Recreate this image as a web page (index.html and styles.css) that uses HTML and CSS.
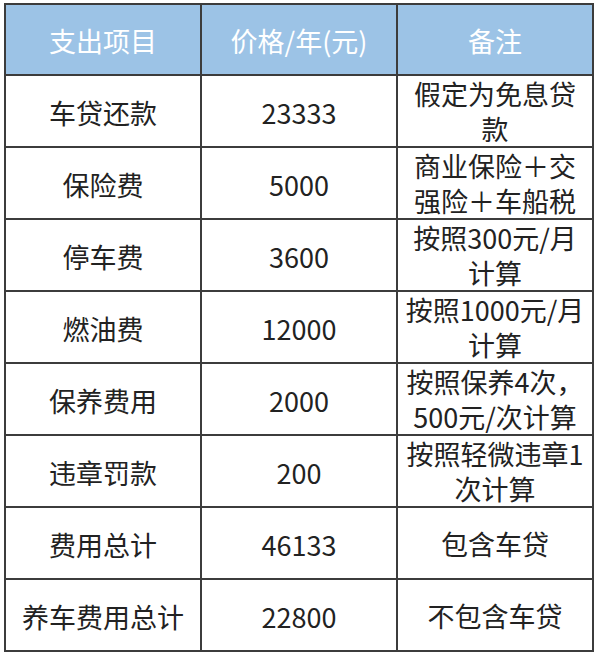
FILE: index.html
```html
<!DOCTYPE html>
<html lang="zh-CN">
<head>
<meta charset="utf-8">
<title>养车费用</title>
<link rel="stylesheet" href="styles.css">
</head>
<body>
<table class="cost">
  <thead>
    <tr class="head"><th>支出项目</th><th>价格/年(元)</th><th>备注</th></tr>
  </thead>
  <tbody>
    <tr><td>车贷还款</td><td>23333</td><td class="note">假定为免息贷款</td></tr>
    <tr><td>保险费</td><td>5000</td><td class="note">商业保险＋交强险＋车船税</td></tr>
    <tr><td>停车费</td><td>3600</td><td class="note">按照300元/月计算</td></tr>
    <tr><td>燃油费</td><td>12000</td><td class="note">按照1000元/月计算</td></tr>
    <tr><td>保养费用</td><td>2000</td><td class="note">按照保养4次，500元/次计算</td></tr>
    <tr><td>违章罚款</td><td>200</td><td class="note">按照轻微违章1次计算</td></tr>
    <tr><td>费用总计</td><td>46133</td><td class="note">包含车贷</td></tr>
    <tr><td>养车费用总计</td><td>22800</td><td class="note">不包含车贷</td></tr>
  </tbody>
</table>
</body>
</html>
```
FILE: styles.css
```css
html, body {
  margin: 0;
  padding: 0;
  background: #ffffff;
}
body {
  padding: 3px 0 0 4px;
  font-family: "Noto Sans CJK SC", "Noto Sans", sans-serif;
  color: #222222;
}
.cost {
  border-collapse: collapse;
  table-layout: fixed;
  width: 590px;
}
.cost th, .cost td {
  width: 33.33%;
  border: 2px solid #3c3c3c;
  text-align: center;
  vertical-align: middle;
  font-size: 27px;
  line-height: 34px;
  padding: 3px 6px 0;
  box-sizing: border-box;
}
.cost th {
  height: 71px;
  background: #9cc3e6;
  color: #ffffff;
  font-weight: normal;
}
.cost td {
  height: 72px;
}
.cost td.note {
  line-height: 35px;
  padding-top: 0;
}
```
